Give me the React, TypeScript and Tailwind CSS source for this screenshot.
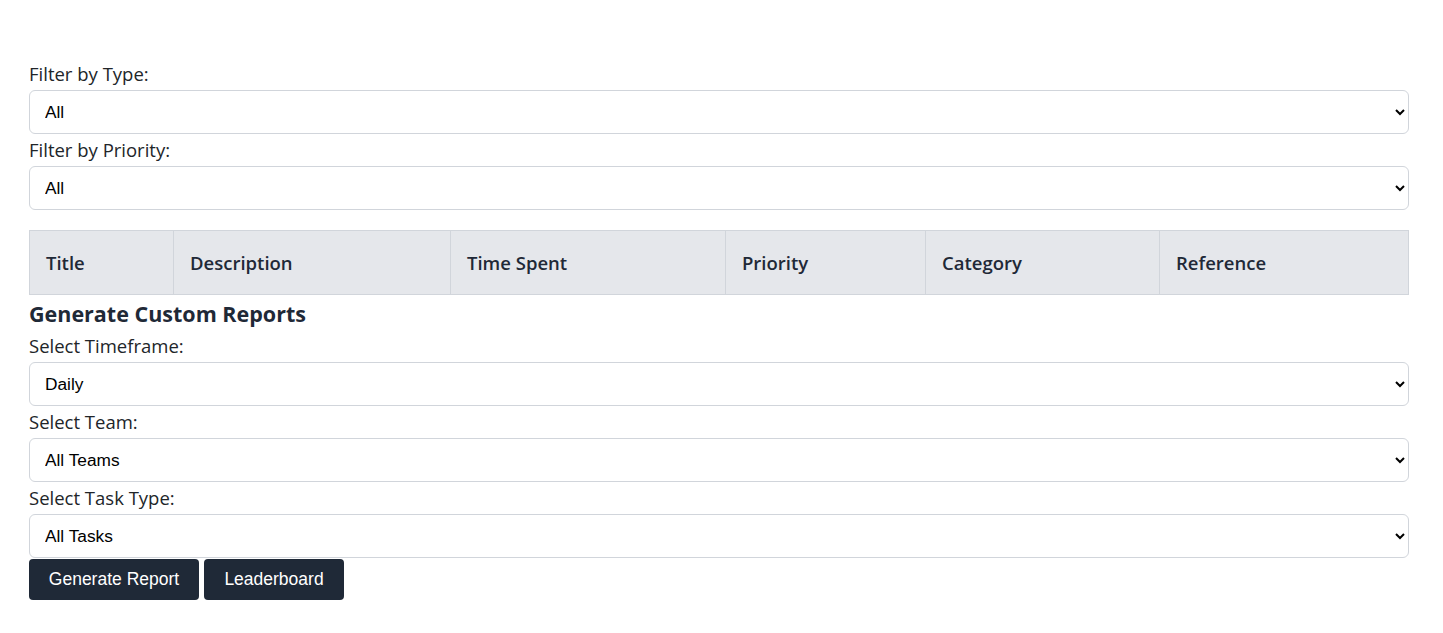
const columns = [
  { name: "Title", width: "w-[144px]" },
  { name: "Description", width: "w-[277px]" },
  { name: "Time Spent", width: "w-[275px]" },
  { name: "Priority", width: "w-[200px]" },
  { name: "Category", width: "w-[234px]" },
  { name: "Reference", width: "" },
]

const selectCls =
  "block w-full h-[44px] pl-[11px] pr-2 border border-[#d1d5db] rounded-md bg-white text-black text-[17.3px] font-['Liberation_Sans',Arial,sans-serif]"

function Field({ label, options, last }: { label: string; options: string[]; last?: boolean }) {
  return (
    <div className={last ? "" : "mb-1"}>
      <label className="block h-6 leading-6 mb-1 text-[18.5px] text-[#212529]">{label}</label>
      <select className={selectCls}>
        {options.map((o) => (
          <option key={o}>{o}</option>
        ))}
      </select>
    </div>
  )
}

export default function App() {
  return (
    <div className="bg-white min-h-screen font-['Open_Sans',sans-serif]">
      <div className="pl-[29px] pr-[34px] pt-[62px]">
        <Field label="Filter by Type:" options={["All", "Bug", "Feature"]} />
        <Field label="Filter by Priority:" options={["All", "High", "Medium", "Low"]} />

        <table className="w-full mt-5 border-collapse">
          <thead>
            <tr className="bg-[#e5e7eb] h-[64px]">
              {columns.map((c) => (
                <th
                  key={c.name}
                  className={`${c.width} border border-[#d1d5db] px-4 text-left text-[18.5px] font-semibold text-[#1f2937]`}
                >
                  {c.name}
                </th>
              ))}
            </tr>
          </thead>
        </table>

        <h2 className="mt-[5px] text-[21.5px] leading-7 font-bold text-[#1f2937]">Generate Custom Reports</h2>
        <div className="mt-[6px]">
          <Field label="Select Timeframe:" options={["Daily", "Weekly", "Monthly"]} />
          <Field label="Select Team:" options={["All Teams"]} />
          <Field label="Select Task Type:" options={["All Tasks"]} last />
          <div className="flex gap-[5px] mt-px font-['Liberation_Sans',Arial,sans-serif]">
            <button className="h-[41px] w-[170px] rounded bg-[#1f2937] text-white text-[17.5px]">Generate Report</button>
            <button className="h-[41px] w-[140px] rounded bg-[#1f2937] text-white text-[17.5px]">Leaderboard</button>
          </div>
        </div>
      </div>
    </div>
  )
}
